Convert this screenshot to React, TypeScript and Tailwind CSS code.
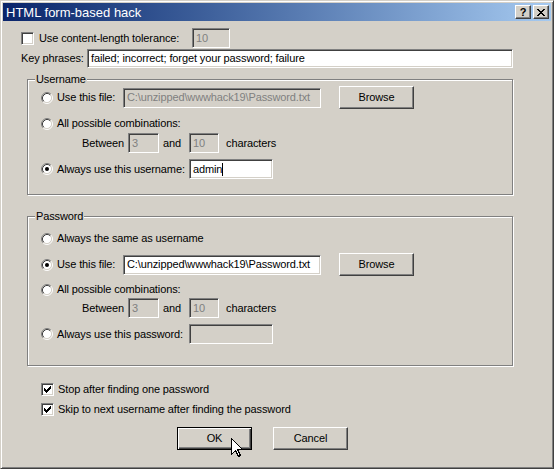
import React from "react";

// Classic Win2000-style dialog: "HTML form-based hack"

const FONT = "font-['Liberation_Sans',Arial,sans-serif]";

function Edit({
  value,
  width,
  disabled,
  caret,
  h = "h-[20px]",
}: {
  value: string;
  width: string;
  disabled?: boolean;
  caret?: boolean;
  h?: string;
}) {
  return (
    <div
      className={`${width} ${h} shrink-0 flex items-center px-[3px] border border-t-[#808080] border-l-[#808080] border-r-white border-b-white shadow-[inset_1px_1px_0_#404040,inset_-1px_-1px_0_#d4d0c8] text-[11px] leading-none whitespace-nowrap overflow-hidden ${
        disabled ? "bg-[#d4d0c8] text-[#808080]" : "bg-white text-black"
      }`}
    >
      {value}
      {caret && <span className="inline-block w-px h-[13px] bg-black" />}
    </div>
  );
}

function Radio({ checked }: { checked?: boolean }) {
  return (
    <svg width="12" height="12" viewBox="0 0 12 12" className="shrink-0">
      <circle cx="6" cy="6" r="4.5" fill="#fff" />
      <path d="M2.11 9.89 A5.5 5.5 0 0 1 9.89 2.11" stroke="#808080" fill="none" />
      <path d="M9.89 2.11 A5.5 5.5 0 0 1 2.11 9.89" stroke="#fff" fill="none" />
      <path d="M2.82 9.18 A4.5 4.5 0 0 1 9.18 2.82" stroke="#404040" fill="none" />
      <path d="M9.18 2.82 A4.5 4.5 0 0 1 2.82 9.18" stroke="#d4d0c8" fill="none" />
      {checked && <circle cx="6" cy="6" r="2" fill="#000" />}
    </svg>
  );
}

const CHECK_COLS: [number, number][] = [
  [0, 2],
  [1, 3],
  [2, 4],
  [3, 3],
  [4, 2],
  [5, 1],
  [6, 0],
];

function Check({ checked }: { checked?: boolean }) {
  return (
    <div className="w-[13px] h-[13px] shrink-0 bg-white border border-t-[#808080] border-l-[#808080] border-r-white border-b-white shadow-[inset_1px_1px_0_#404040,inset_-1px_-1px_0_#d4d0c8]">
      {checked && (
        <svg width="11" height="11" viewBox="0 0 11 11" shapeRendering="crispEdges">
          {CHECK_COLS.map(([x, y]) => (
            <rect key={x} x={x + 2} y={y + 2} width="1" height="3" fill="#000" />
          ))}
        </svg>
      )}
    </div>
  );
}

function Button({ label, isDefault }: { label: string; isDefault?: boolean }) {
  return (
    <div
      className={`w-[75px] h-[23px] shrink-0 flex items-center justify-center bg-[#d4d0c8] text-[11px] text-black ${
        isDefault
          ? "border border-black shadow-[inset_1px_1px_0_#fff,inset_-1px_-1px_0_#404040,inset_-2px_-2px_0_#808080]"
          : "border border-t-white border-l-white border-r-[#404040] border-b-[#404040] shadow-[inset_-1px_-1px_0_#808080]"
      }`}
    >
      {label}
    </div>
  );
}

function GroupBox({
  title,
  h,
  mt,
  children,
}: {
  title: string;
  h: string;
  mt: string;
  children: React.ReactNode;
}) {
  return (
    <div
      className={`relative ml-[24px] ${mt} w-[486px] ${h} border border-[#808080] shadow-[inset_1px_1px_0_#fff,1px_1px_0_#fff] pl-[13px]`}
    >
      <span className="absolute left-[7px] -top-[8px] px-[1px] bg-[#d4d0c8] text-[11px] leading-[14px]">
        {title}
      </span>
      {children}
    </div>
  );
}

function RadioRow({
  checked,
  label,
  mt,
  children,
  h = "h-[15px]",
  labelW,
}: {
  checked?: boolean;
  label: string;
  mt: string;
  children?: React.ReactNode;
  h?: string;
  labelW?: string;
}) {
  return (
    <div className={`flex items-center ${mt} ${h}`}>
      <Radio checked={checked} />
      <span className={`ml-[4px] whitespace-nowrap ${labelW ?? ""}`}>{label}</span>
      {children}
    </div>
  );
}

function BetweenRow({ mt }: { mt: string }) {
  return (
    <div className={`flex items-center ${mt} h-[20px]`}>
      <span className="ml-[41px] w-[46px]">Between</span>
      <Edit value="3" width="w-[31px]" disabled />
      <span className="w-[30px] pl-[4px]">and</span>
      <Edit value="10" width="w-[30px]" disabled />
      <span className="ml-[7px]">characters</span>
    </div>
  );
}

export default function App() {
  return (
    <div
      className={`${FONT} relative w-[554px] h-[469px] bg-[#d4d0c8] border border-t-[#d4d0c8] border-l-[#d4d0c8] border-r-[#404040] border-b-[#404040] shadow-[inset_1px_1px_0_#fff,inset_-1px_-1px_0_#808080] p-[2px] text-[11px] leading-[13px] tracking-[-0.12px] text-black overflow-hidden`}
    >
      {/* title bar */}
      <div className="h-[18px] flex items-center bg-gradient-to-r from-[#0a246a] to-[#a6caf0]">
        <span className="pl-[3px] text-[13px] leading-none text-white tracking-normal">
          HTML form-based hack
        </span>
        <div className="ml-auto mr-[2px] flex gap-[2px]">
          <div className="w-[16px] h-[14px] flex items-center justify-center bg-[#d4d0c8] border border-t-white border-l-white border-r-[#404040] border-b-[#404040] shadow-[inset_-1px_-1px_0_#808080] text-[11px] font-bold leading-none">
            ?
          </div>
          <div className="w-[16px] h-[14px] flex items-center justify-center bg-[#d4d0c8] border border-t-white border-l-white border-r-[#404040] border-b-[#404040] shadow-[inset_-1px_-1px_0_#808080]">
            <svg width="8" height="7" viewBox="0 0 8 7" shapeRendering="crispEdges">
              <path d="M0 0h2v1h-2zM6 0h2v1h-2zM1 1h2v1h-2zM5 1h2v1h-2zM2 2h4v1h-4zM3 3h2v1h-2zM2 4h4v1h-4zM1 5h2v1h-2zM5 5h2v1h-2zM0 6h2v1h-2zM6 6h2v1h-2z" fill="#000" />
            </svg>
          </div>
        </div>
      </div>

      {/* content-length tolerance */}
      <div className="flex items-center mt-[7px] h-[20px] pl-[18px]">
        <div className="w-[171px] flex items-center">
          <Check />
          <span className="ml-[5px]">Use content-length tolerance:</span>
        </div>
        <Edit value="10" width="w-[38px]" disabled />
      </div>

      {/* key phrases */}
      <div className="flex items-center mt-[1px] h-[19px] pl-[18px]">
        <span className="w-[66px]">Key phrases:</span>
        <Edit value="failed; incorrect; forget your password; failure" width="w-[426px]" h="h-[19px]" />
      </div>

      <GroupBox title="Username" h="h-[116px]" mt="mt-[11px]">
        <RadioRow label="Use this file:" mt="mt-[6px]" h="h-[23px]" labelW="w-[66px]">
          <Edit value="C:\unzipped\wwwhack19\Password.txt" width="w-[198px]" disabled />
          <div className="ml-[18px]">
            <Button label="Browse" />
          </div>
        </RadioRow>
        <RadioRow label="All possible combinations:" mt="mt-[7px]" />
        <BetweenRow mt="mt-[2px]" />
        <RadioRow checked label="Always use this username:" mt="mt-[6px]" h="h-[20px]" labelW="w-[132px]">
          <Edit value="admin" width="w-[84px]" caret />
        </RadioRow>
      </GroupBox>

      <GroupBox title="Password" h="h-[150px]" mt="mt-[21px]">
        <RadioRow label="Always the same as username" mt="mt-[14px]" />
        <RadioRow checked label="Use this file:" mt="mt-[7px]" h="h-[23px]" labelW="w-[66px]">
          <Edit value="C:\unzipped\wwwhack19\Password.txt" width="w-[198px]" />
          <div className="ml-[18px]">
            <Button label="Browse" />
          </div>
        </RadioRow>
        <RadioRow label="All possible combinations:" mt="mt-[6px]" />
        <BetweenRow mt="mt-[1px]" />
        <RadioRow label="Always use this password:" mt="mt-[6px]" h="h-[20px]" labelW="w-[132px]">
          <Edit value="" width="w-[84px]" disabled />
        </RadioRow>
      </GroupBox>

      {/* options */}
      <div className="flex items-center mt-[17px] h-[13px] ml-[38px]">
        <Check checked />
        <span className="ml-[4px]">Stop after finding one password</span>
      </div>
      <div className="flex items-center mt-[7px] h-[13px] ml-[38px]">
        <Check checked />
        <span className="ml-[4px]">Skip to next username after finding the password</span>
      </div>

      {/* buttons */}
      <div className="flex mt-[11px] ml-[174px] gap-[21px]">
        <Button label="OK" isDefault />
        <Button label="Cancel" />
      </div>

      {/* mouse pointer */}
      <svg
        width="12"
        height="20"
        viewBox="0 0 12 20"
        className="absolute left-[230px] top-[437px]"
        shapeRendering="crispEdges"
      >
        <path
          d="M0.5 0.5 L0.5 16.5 L4.5 12.5 L7.5 18.5 L9.5 17.5 L6.5 11.5 L11.5 11.5 Z"
          fill="#fff"
          stroke="#000"
          strokeWidth="1"
          strokeLinejoin="miter"
        />
      </svg>
    </div>
  );
}
